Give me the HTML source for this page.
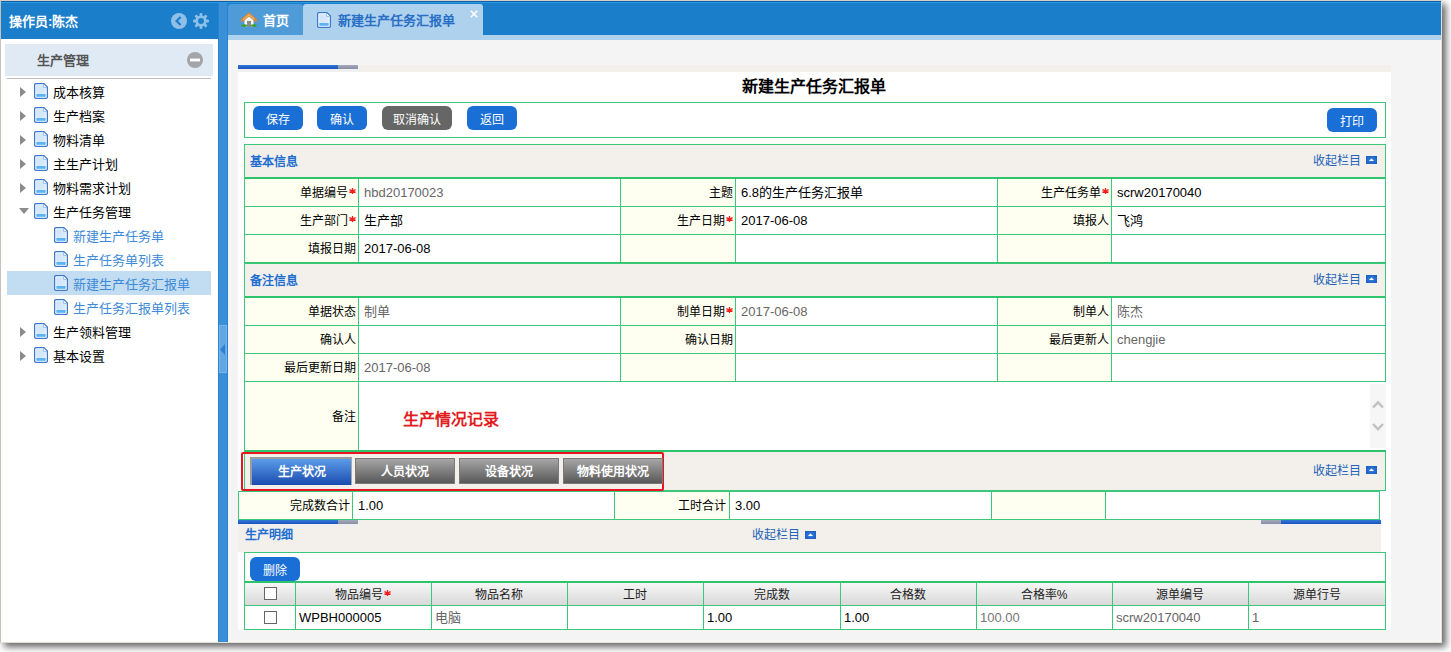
<!DOCTYPE html><html lang="zh-CN"><head><meta charset="utf-8"><style>
html,body{margin:0;padding:0}
body{width:1451px;height:652px;position:relative;overflow:hidden;background:#fff;font-family:"Liberation Sans",sans-serif;font-size:12px;color:#000}
.a{position:absolute}
.t{white-space:nowrap}
.a svg,svg.a{display:block}
.btn{position:absolute;background:#1a6fd6;color:#fff;border-radius:6px;text-align:center;font-size:12px;line-height:28px;height:24px;overflow:hidden;font-weight:300}
</style></head><body>
<div class="a" style="left:0px;top:0px;width:1442px;height:643px;background:#f4f4f4;border-top:1px solid #d8d0c6;border-left:1px solid #c8c2bc;border-right:1px solid #e4ddd6;border-bottom:1px solid #e4ddd6;box-sizing:border-box;box-shadow:4px 4px 7px rgba(0,0,0,.6)"></div>
<div class="a" style="left:1px;top:1px;width:1440px;height:1px;background:#0b5fa5"></div>
<div class="a" style="left:1px;top:2px;width:1440px;height:1px;background:#2a9ae8"></div>
<div class="a" style="left:1px;top:3px;width:217px;height:36px;background:#1a7ecb"></div>
<div class="a" style="left:1px;top:39px;width:217px;height:603px;background:#fff"></div>
<div class="a" style="left:218px;top:3px;width:10px;height:639px;background:#3b8fd6;border-left:1px solid #2582d2;border-right:1px solid #2582d2;box-sizing:border-box"></div>
<div class="a" style="left:219px;top:325px;width:8px;height:48px;background:#62a6e2;border:1px solid #7ab4e8;box-sizing:border-box"></div>
<svg class="a" style="left:220px;top:344px" width="6" height="11"><path d="M5 0 L0 5.5 L5 11 Z" fill="#2f7fd0"/></svg>
<div class="a" style="left:228px;top:3px;width:1213px;height:32px;background:#1a7ecb"></div>
<div class="a" style="left:228px;top:4px;width:75px;height:31px;background:#4f9bd8;border-radius:3px 3px 0 0"></div>
<div class="a" style="left:303px;top:4px;width:180px;height:31px;background:#aed2ee;border-radius:3px 3px 0 0"></div>
<div class="a" style="left:228px;top:35px;width:1213px;height:5px;background:#aed2ee"></div>
<div class="a" style="left:228px;top:40px;width:1213px;height:602px;background:#f4f4f4;border-right:1px solid #fafafa;border-bottom:1px solid #fafafa;box-sizing:border-box"></div>
<div class="a t" style="left:9px;top:14px;height:16px;line-height:16px;color:#fff;font-weight:bold;font-size:13px">操作员:陈杰</div>
<svg class="a" style="left:171px;top:13px" width="16" height="16" viewBox="0 0 16 16"><circle cx="8" cy="8" r="8" fill="#8ec0e8"/><path d="M9.6 4 L5.6 8 L9.6 12" fill="none" stroke="#1a7ecb" stroke-width="2.2"/></svg>
<svg class="a" style="left:193px;top:13px" width="16" height="16" viewBox="0 0 16 16"><g fill="#8ec0e8"><circle cx="8" cy="8" r="5.6"/><rect x="6.6" y="0" width="2.8" height="4" rx="1" transform="rotate(0 8 8)"/><rect x="6.6" y="0" width="2.8" height="4" rx="1" transform="rotate(45 8 8)"/><rect x="6.6" y="0" width="2.8" height="4" rx="1" transform="rotate(90 8 8)"/><rect x="6.6" y="0" width="2.8" height="4" rx="1" transform="rotate(135 8 8)"/><rect x="6.6" y="0" width="2.8" height="4" rx="1" transform="rotate(180 8 8)"/><rect x="6.6" y="0" width="2.8" height="4" rx="1" transform="rotate(225 8 8)"/><rect x="6.6" y="0" width="2.8" height="4" rx="1" transform="rotate(270 8 8)"/><rect x="6.6" y="0" width="2.8" height="4" rx="1" transform="rotate(315 8 8)"/></g><circle cx="8" cy="8" r="3" fill="#1a7ecb"/></svg>
<svg class="a" style="left:241px;top:12px" width="16" height="15" viewBox="0 0 16 15"><path d="M3.5 7 V14.5 H12.5 V7 L8 3 Z" fill="#fafafa"/><rect x="6.3" y="9.2" width="3.4" height="5.3" fill="#8c8c8c" stroke="#777" stroke-width="0.6"/><path d="M1.2 8.3 L8 2.2 L14.8 8.3" fill="none" stroke="#d4873a" stroke-width="3.4" stroke-linejoin="round" stroke-linecap="round"/><path d="M2.5 7.5 L8 2.6 L13.5 7.5" fill="none" stroke="#e8b878" stroke-width="1.2" stroke-linejoin="round"/><ellipse cx="3.2" cy="13.6" rx="3" ry="1.4" fill="#3aa02e"/><ellipse cx="12.8" cy="13.6" rx="3" ry="1.4" fill="#3aa02e"/></svg>
<div class="a t" style="left:263px;top:13px;height:16px;line-height:16px;color:#fff;font-weight:bold;font-size:13px">首页</div>
<div class="a" style="left:317px;top:12px;width:14px;height:16px"><svg width="14" height="16" viewBox="0 0 14 16"><defs><linearGradient id="dg" x1="0" y1="0" x2="1" y2="1"><stop offset="0" stop-color="#c9e0fb"/><stop offset="1" stop-color="#e4effc"/></linearGradient></defs><path d="M1.8 0.65 H9.9 L13.35 4.1 V14.2 Q13.35 15.35 12.2 15.35 H1.8 Q0.65 15.35 0.65 14.2 V1.8 Q0.65 0.65 1.8 0.65 Z" fill="url(#dg)" stroke="#3b78cc" stroke-width="1.3"/><path d="M1.9 1.9 H9.4 L12.1 4.6 V14.1 H1.9 Z" fill="none" stroke="#fff" stroke-width="0.9" opacity="0.8"/><path d="M9.6 1.2 V4.4 H12.8" fill="#fff" stroke="#8fb6ea" stroke-width="0.9"/><rect x="2.4" y="11" width="9.2" height="2.8" fill="#5ab4f6"/></svg></div>
<div class="a t" style="left:338px;top:13px;height:16px;line-height:16px;color:#2a6fc6;font-weight:bold;font-size:13px">新建生产任务汇报单</div>
<svg class="a" style="left:470px;top:10px" width="8" height="8"><path d="M0.8 0.8 L7.2 7.2 M7.2 0.8 L0.8 7.2" stroke="#fff" stroke-width="1.5"/></svg>
<div class="a" style="left:5px;top:44px;width:208px;height:32px;background:#e0eaf4"></div>
<div class="a t" style="left:37px;top:53px;height:16px;line-height:16px;color:#555;font-weight:bold;font-size:13px">生产管理</div>
<svg class="a" style="left:187px;top:52px" width="16" height="16"><circle cx="8" cy="8" r="8" fill="#a2a6aa"/><rect x="3" y="6.6" width="10" height="2.8" fill="#fff"/></svg>
<div class="a" style="left:7px;top:78px;width:204px;height:1px;background:#bdbdbd"></div>
<svg class="a" style="left:20px;top:87px" width="6" height="10"><path d="M0 0 L6 5 L0 10 Z" fill="#8c8c8c"/></svg>
<div class="a" style="left:34px;top:83px;width:14px;height:16px"><svg width="14" height="16" viewBox="0 0 14 16"><defs><linearGradient id="dg" x1="0" y1="0" x2="1" y2="1"><stop offset="0" stop-color="#c9e0fb"/><stop offset="1" stop-color="#e4effc"/></linearGradient></defs><path d="M1.8 0.65 H9.9 L13.35 4.1 V14.2 Q13.35 15.35 12.2 15.35 H1.8 Q0.65 15.35 0.65 14.2 V1.8 Q0.65 0.65 1.8 0.65 Z" fill="url(#dg)" stroke="#3b78cc" stroke-width="1.3"/><path d="M1.9 1.9 H9.4 L12.1 4.6 V14.1 H1.9 Z" fill="none" stroke="#fff" stroke-width="0.9" opacity="0.8"/><path d="M9.6 1.2 V4.4 H12.8" fill="#fff" stroke="#8fb6ea" stroke-width="0.9"/><rect x="2.4" y="11" width="9.2" height="2.8" fill="#5ab4f6"/></svg></div>
<div class="a t" style="left:53px;top:85px;height:16px;line-height:16px;font-size:13px;color:#000">成本核算</div>
<svg class="a" style="left:20px;top:111px" width="6" height="10"><path d="M0 0 L6 5 L0 10 Z" fill="#8c8c8c"/></svg>
<div class="a" style="left:34px;top:107px;width:14px;height:16px"><svg width="14" height="16" viewBox="0 0 14 16"><defs><linearGradient id="dg" x1="0" y1="0" x2="1" y2="1"><stop offset="0" stop-color="#c9e0fb"/><stop offset="1" stop-color="#e4effc"/></linearGradient></defs><path d="M1.8 0.65 H9.9 L13.35 4.1 V14.2 Q13.35 15.35 12.2 15.35 H1.8 Q0.65 15.35 0.65 14.2 V1.8 Q0.65 0.65 1.8 0.65 Z" fill="url(#dg)" stroke="#3b78cc" stroke-width="1.3"/><path d="M1.9 1.9 H9.4 L12.1 4.6 V14.1 H1.9 Z" fill="none" stroke="#fff" stroke-width="0.9" opacity="0.8"/><path d="M9.6 1.2 V4.4 H12.8" fill="#fff" stroke="#8fb6ea" stroke-width="0.9"/><rect x="2.4" y="11" width="9.2" height="2.8" fill="#5ab4f6"/></svg></div>
<div class="a t" style="left:53px;top:109px;height:16px;line-height:16px;font-size:13px;color:#000">生产档案</div>
<svg class="a" style="left:20px;top:135px" width="6" height="10"><path d="M0 0 L6 5 L0 10 Z" fill="#8c8c8c"/></svg>
<div class="a" style="left:34px;top:131px;width:14px;height:16px"><svg width="14" height="16" viewBox="0 0 14 16"><defs><linearGradient id="dg" x1="0" y1="0" x2="1" y2="1"><stop offset="0" stop-color="#c9e0fb"/><stop offset="1" stop-color="#e4effc"/></linearGradient></defs><path d="M1.8 0.65 H9.9 L13.35 4.1 V14.2 Q13.35 15.35 12.2 15.35 H1.8 Q0.65 15.35 0.65 14.2 V1.8 Q0.65 0.65 1.8 0.65 Z" fill="url(#dg)" stroke="#3b78cc" stroke-width="1.3"/><path d="M1.9 1.9 H9.4 L12.1 4.6 V14.1 H1.9 Z" fill="none" stroke="#fff" stroke-width="0.9" opacity="0.8"/><path d="M9.6 1.2 V4.4 H12.8" fill="#fff" stroke="#8fb6ea" stroke-width="0.9"/><rect x="2.4" y="11" width="9.2" height="2.8" fill="#5ab4f6"/></svg></div>
<div class="a t" style="left:53px;top:133px;height:16px;line-height:16px;font-size:13px;color:#000">物料清单</div>
<svg class="a" style="left:20px;top:159px" width="6" height="10"><path d="M0 0 L6 5 L0 10 Z" fill="#8c8c8c"/></svg>
<div class="a" style="left:34px;top:155px;width:14px;height:16px"><svg width="14" height="16" viewBox="0 0 14 16"><defs><linearGradient id="dg" x1="0" y1="0" x2="1" y2="1"><stop offset="0" stop-color="#c9e0fb"/><stop offset="1" stop-color="#e4effc"/></linearGradient></defs><path d="M1.8 0.65 H9.9 L13.35 4.1 V14.2 Q13.35 15.35 12.2 15.35 H1.8 Q0.65 15.35 0.65 14.2 V1.8 Q0.65 0.65 1.8 0.65 Z" fill="url(#dg)" stroke="#3b78cc" stroke-width="1.3"/><path d="M1.9 1.9 H9.4 L12.1 4.6 V14.1 H1.9 Z" fill="none" stroke="#fff" stroke-width="0.9" opacity="0.8"/><path d="M9.6 1.2 V4.4 H12.8" fill="#fff" stroke="#8fb6ea" stroke-width="0.9"/><rect x="2.4" y="11" width="9.2" height="2.8" fill="#5ab4f6"/></svg></div>
<div class="a t" style="left:53px;top:157px;height:16px;line-height:16px;font-size:13px;color:#000">主生产计划</div>
<svg class="a" style="left:20px;top:183px" width="6" height="10"><path d="M0 0 L6 5 L0 10 Z" fill="#8c8c8c"/></svg>
<div class="a" style="left:34px;top:179px;width:14px;height:16px"><svg width="14" height="16" viewBox="0 0 14 16"><defs><linearGradient id="dg" x1="0" y1="0" x2="1" y2="1"><stop offset="0" stop-color="#c9e0fb"/><stop offset="1" stop-color="#e4effc"/></linearGradient></defs><path d="M1.8 0.65 H9.9 L13.35 4.1 V14.2 Q13.35 15.35 12.2 15.35 H1.8 Q0.65 15.35 0.65 14.2 V1.8 Q0.65 0.65 1.8 0.65 Z" fill="url(#dg)" stroke="#3b78cc" stroke-width="1.3"/><path d="M1.9 1.9 H9.4 L12.1 4.6 V14.1 H1.9 Z" fill="none" stroke="#fff" stroke-width="0.9" opacity="0.8"/><path d="M9.6 1.2 V4.4 H12.8" fill="#fff" stroke="#8fb6ea" stroke-width="0.9"/><rect x="2.4" y="11" width="9.2" height="2.8" fill="#5ab4f6"/></svg></div>
<div class="a t" style="left:53px;top:181px;height:16px;line-height:16px;font-size:13px;color:#000">物料需求计划</div>
<svg class="a" style="left:19px;top:208px" width="10" height="6"><path d="M0 0 L10 0 L5 6 Z" fill="#8c8c8c"/></svg>
<div class="a" style="left:34px;top:203px;width:14px;height:16px"><svg width="14" height="16" viewBox="0 0 14 16"><defs><linearGradient id="dg" x1="0" y1="0" x2="1" y2="1"><stop offset="0" stop-color="#c9e0fb"/><stop offset="1" stop-color="#e4effc"/></linearGradient></defs><path d="M1.8 0.65 H9.9 L13.35 4.1 V14.2 Q13.35 15.35 12.2 15.35 H1.8 Q0.65 15.35 0.65 14.2 V1.8 Q0.65 0.65 1.8 0.65 Z" fill="url(#dg)" stroke="#3b78cc" stroke-width="1.3"/><path d="M1.9 1.9 H9.4 L12.1 4.6 V14.1 H1.9 Z" fill="none" stroke="#fff" stroke-width="0.9" opacity="0.8"/><path d="M9.6 1.2 V4.4 H12.8" fill="#fff" stroke="#8fb6ea" stroke-width="0.9"/><rect x="2.4" y="11" width="9.2" height="2.8" fill="#5ab4f6"/></svg></div>
<div class="a t" style="left:53px;top:205px;height:16px;line-height:16px;font-size:13px;color:#000">生产任务管理</div>
<div class="a" style="left:54px;top:227px;width:14px;height:16px"><svg width="14" height="16" viewBox="0 0 14 16"><defs><linearGradient id="dg" x1="0" y1="0" x2="1" y2="1"><stop offset="0" stop-color="#c9e0fb"/><stop offset="1" stop-color="#e4effc"/></linearGradient></defs><path d="M1.8 0.65 H9.9 L13.35 4.1 V14.2 Q13.35 15.35 12.2 15.35 H1.8 Q0.65 15.35 0.65 14.2 V1.8 Q0.65 0.65 1.8 0.65 Z" fill="url(#dg)" stroke="#3b78cc" stroke-width="1.3"/><path d="M1.9 1.9 H9.4 L12.1 4.6 V14.1 H1.9 Z" fill="none" stroke="#fff" stroke-width="0.9" opacity="0.8"/><path d="M9.6 1.2 V4.4 H12.8" fill="#fff" stroke="#8fb6ea" stroke-width="0.9"/><rect x="2.4" y="11" width="9.2" height="2.8" fill="#5ab4f6"/></svg></div>
<div class="a t" style="left:73px;top:229px;height:16px;line-height:16px;font-size:13px;color:#3d8ad8">新建生产任务单</div>
<div class="a" style="left:54px;top:251px;width:14px;height:16px"><svg width="14" height="16" viewBox="0 0 14 16"><defs><linearGradient id="dg" x1="0" y1="0" x2="1" y2="1"><stop offset="0" stop-color="#c9e0fb"/><stop offset="1" stop-color="#e4effc"/></linearGradient></defs><path d="M1.8 0.65 H9.9 L13.35 4.1 V14.2 Q13.35 15.35 12.2 15.35 H1.8 Q0.65 15.35 0.65 14.2 V1.8 Q0.65 0.65 1.8 0.65 Z" fill="url(#dg)" stroke="#3b78cc" stroke-width="1.3"/><path d="M1.9 1.9 H9.4 L12.1 4.6 V14.1 H1.9 Z" fill="none" stroke="#fff" stroke-width="0.9" opacity="0.8"/><path d="M9.6 1.2 V4.4 H12.8" fill="#fff" stroke="#8fb6ea" stroke-width="0.9"/><rect x="2.4" y="11" width="9.2" height="2.8" fill="#5ab4f6"/></svg></div>
<div class="a t" style="left:73px;top:253px;height:16px;line-height:16px;font-size:13px;color:#3d8ad8">生产任务单列表</div>
<div class="a" style="left:7px;top:271px;width:204px;height:24px;background:#c2dcf2"></div>
<div class="a" style="left:54px;top:275px;width:14px;height:16px"><svg width="14" height="16" viewBox="0 0 14 16"><defs><linearGradient id="dg" x1="0" y1="0" x2="1" y2="1"><stop offset="0" stop-color="#c9e0fb"/><stop offset="1" stop-color="#e4effc"/></linearGradient></defs><path d="M1.8 0.65 H9.9 L13.35 4.1 V14.2 Q13.35 15.35 12.2 15.35 H1.8 Q0.65 15.35 0.65 14.2 V1.8 Q0.65 0.65 1.8 0.65 Z" fill="url(#dg)" stroke="#3b78cc" stroke-width="1.3"/><path d="M1.9 1.9 H9.4 L12.1 4.6 V14.1 H1.9 Z" fill="none" stroke="#fff" stroke-width="0.9" opacity="0.8"/><path d="M9.6 1.2 V4.4 H12.8" fill="#fff" stroke="#8fb6ea" stroke-width="0.9"/><rect x="2.4" y="11" width="9.2" height="2.8" fill="#5ab4f6"/></svg></div>
<div class="a t" style="left:73px;top:277px;height:16px;line-height:16px;font-size:13px;color:#3d8ad8">新建生产任务汇报单</div>
<div class="a" style="left:54px;top:299px;width:14px;height:16px"><svg width="14" height="16" viewBox="0 0 14 16"><defs><linearGradient id="dg" x1="0" y1="0" x2="1" y2="1"><stop offset="0" stop-color="#c9e0fb"/><stop offset="1" stop-color="#e4effc"/></linearGradient></defs><path d="M1.8 0.65 H9.9 L13.35 4.1 V14.2 Q13.35 15.35 12.2 15.35 H1.8 Q0.65 15.35 0.65 14.2 V1.8 Q0.65 0.65 1.8 0.65 Z" fill="url(#dg)" stroke="#3b78cc" stroke-width="1.3"/><path d="M1.9 1.9 H9.4 L12.1 4.6 V14.1 H1.9 Z" fill="none" stroke="#fff" stroke-width="0.9" opacity="0.8"/><path d="M9.6 1.2 V4.4 H12.8" fill="#fff" stroke="#8fb6ea" stroke-width="0.9"/><rect x="2.4" y="11" width="9.2" height="2.8" fill="#5ab4f6"/></svg></div>
<div class="a t" style="left:73px;top:301px;height:16px;line-height:16px;font-size:13px;color:#3d8ad8">生产任务汇报单列表</div>
<svg class="a" style="left:20px;top:327px" width="6" height="10"><path d="M0 0 L6 5 L0 10 Z" fill="#8c8c8c"/></svg>
<div class="a" style="left:34px;top:323px;width:14px;height:16px"><svg width="14" height="16" viewBox="0 0 14 16"><defs><linearGradient id="dg" x1="0" y1="0" x2="1" y2="1"><stop offset="0" stop-color="#c9e0fb"/><stop offset="1" stop-color="#e4effc"/></linearGradient></defs><path d="M1.8 0.65 H9.9 L13.35 4.1 V14.2 Q13.35 15.35 12.2 15.35 H1.8 Q0.65 15.35 0.65 14.2 V1.8 Q0.65 0.65 1.8 0.65 Z" fill="url(#dg)" stroke="#3b78cc" stroke-width="1.3"/><path d="M1.9 1.9 H9.4 L12.1 4.6 V14.1 H1.9 Z" fill="none" stroke="#fff" stroke-width="0.9" opacity="0.8"/><path d="M9.6 1.2 V4.4 H12.8" fill="#fff" stroke="#8fb6ea" stroke-width="0.9"/><rect x="2.4" y="11" width="9.2" height="2.8" fill="#5ab4f6"/></svg></div>
<div class="a t" style="left:53px;top:325px;height:16px;line-height:16px;font-size:13px;color:#000">生产领料管理</div>
<svg class="a" style="left:20px;top:351px" width="6" height="10"><path d="M0 0 L6 5 L0 10 Z" fill="#8c8c8c"/></svg>
<div class="a" style="left:34px;top:347px;width:14px;height:16px"><svg width="14" height="16" viewBox="0 0 14 16"><defs><linearGradient id="dg" x1="0" y1="0" x2="1" y2="1"><stop offset="0" stop-color="#c9e0fb"/><stop offset="1" stop-color="#e4effc"/></linearGradient></defs><path d="M1.8 0.65 H9.9 L13.35 4.1 V14.2 Q13.35 15.35 12.2 15.35 H1.8 Q0.65 15.35 0.65 14.2 V1.8 Q0.65 0.65 1.8 0.65 Z" fill="url(#dg)" stroke="#3b78cc" stroke-width="1.3"/><path d="M1.9 1.9 H9.4 L12.1 4.6 V14.1 H1.9 Z" fill="none" stroke="#fff" stroke-width="0.9" opacity="0.8"/><path d="M9.6 1.2 V4.4 H12.8" fill="#fff" stroke="#8fb6ea" stroke-width="0.9"/><rect x="2.4" y="11" width="9.2" height="2.8" fill="#5ab4f6"/></svg></div>
<div class="a t" style="left:53px;top:349px;height:16px;line-height:16px;font-size:13px;color:#000">基本设置</div>
<div class="a" style="left:238px;top:65px;width:1153px;height:7px;background:#f3f0ec"></div>
<div class="a" style="left:238px;top:65px;width:122px;height:7px;background:#f0f0f0"></div>
<div class="a" style="left:238px;top:65px;width:100px;height:4px;background:linear-gradient(#2f7ad6,#1b52be)"></div>
<div class="a" style="left:338px;top:65px;width:20px;height:4px;background:linear-gradient(#a2abb8,#8a8ca6)"></div>
<div class="a" style="left:238px;top:72px;width:1153px;height:558px;background:#fff"></div>
<div class="a t" style="left:614px;width:400px;text-align:center;top:77px;height:20px;line-height:20px;font-size:16px;font-weight:bold;font-family:"Liberation Serif",serif">新建生产任务汇报单</div>
<div class="a" style="left:244px;top:102px;width:1142px;height:36px;border:1px solid #3cc87a;box-sizing:border-box"></div>
<div class="btn" style="left:253px;top:106px;width:50px;background:#1a6fd6">保存</div>
<div class="btn" style="left:317px;top:106px;width:50px;background:#1a6fd6">确认</div>
<div class="btn" style="left:382px;top:106px;width:70px;background:#666">取消确认</div>
<div class="btn" style="left:467px;top:106px;width:50px;background:#1a6fd6">返回</div>
<div class="btn" style="left:1327px;top:108px;width:50px">打印</div>
<div class="a" style="left:245px;top:145px;width:1140px;height:32px;background:#f3f0ec"></div>
<div class="a" style="left:244px;top:144px;width:1142px;height:1px;background:#3cc87a"></div>
<div class="a t" style="left:250px;top:154px;height:16px;line-height:16px;color:#1f6fd0;font-weight:bold;font-size:12px">基本信息</div>
<div class="a" style="left:1366px;top:156px;width:11px;height:8px"><svg width="11" height="8" viewBox="0 0 11 8"><defs><radialGradient id="cg"><stop offset="0" stop-color="#3f86dc"/><stop offset="1" stop-color="#1d62c8"/></radialGradient></defs><rect x="0" y="0" width="11" height="8" fill="url(#cg)"/><path d="M3 5 L5.5 2.5 L8 5 Z" fill="#fff"/></svg></div>
<div class="a t" style="left:1061px;width:300px;text-align:right;top:153px;height:16px;line-height:16px;color:#2262b8;font-size:12px">收起栏目</div>
<div class="a" style="left:244px;top:177px;width:1142px;height:2px;background:#2ec46c"></div>
<div class="a" style="left:245px;top:179px;width:113px;height:27px;background:#fefff0"></div>
<div class="a" style="left:621px;top:179px;width:114px;height:27px;background:#fefff0"></div>
<div class="a" style="left:998px;top:179px;width:113px;height:27px;background:#fefff0"></div>
<div class="a t" style="left:56px;width:300px;text-align:right;top:185px;height:16px;line-height:16px;font-size:12px;color:#000">单据编号<svg width="7" height="6" viewBox="0 0 7 6" style="display:inline-block;vertical-align:3px;margin-left:1px"><path d="M0.4 1.6 L6.6 4.4 M0.4 4.4 L6.6 1.6 M3.5 0 V6" stroke="#f21c1c" stroke-width="1.3"/></svg></div>
<div class="a t" style="left:364px;top:185px;height:16px;line-height:16px;font-size:13px;color:#666">hbd20170023</div>
<div class="a t" style="left:433px;width:300px;text-align:right;top:185px;height:16px;line-height:16px;font-size:12px;color:#000">主题</div>
<div class="a t" style="left:741px;top:185px;height:16px;line-height:16px;font-size:13px;color:#000">6.8的生产任务汇报单</div>
<div class="a t" style="left:809px;width:300px;text-align:right;top:185px;height:16px;line-height:16px;font-size:12px;color:#000">生产任务单<svg width="7" height="6" viewBox="0 0 7 6" style="display:inline-block;vertical-align:3px;margin-left:1px"><path d="M0.4 1.6 L6.6 4.4 M0.4 4.4 L6.6 1.6 M3.5 0 V6" stroke="#f21c1c" stroke-width="1.3"/></svg></div>
<div class="a t" style="left:1117px;top:185px;height:16px;line-height:16px;font-size:13px;color:#000">scrw20170040</div>
<div class="a" style="left:244px;top:206px;width:1142px;height:1px;background:#3cc87a"></div>
<div class="a" style="left:245px;top:207px;width:113px;height:27px;background:#fefff0"></div>
<div class="a" style="left:621px;top:207px;width:114px;height:27px;background:#fefff0"></div>
<div class="a" style="left:998px;top:207px;width:113px;height:27px;background:#fefff0"></div>
<div class="a t" style="left:56px;width:300px;text-align:right;top:213px;height:16px;line-height:16px;font-size:12px;color:#000">生产部门<svg width="7" height="6" viewBox="0 0 7 6" style="display:inline-block;vertical-align:3px;margin-left:1px"><path d="M0.4 1.6 L6.6 4.4 M0.4 4.4 L6.6 1.6 M3.5 0 V6" stroke="#f21c1c" stroke-width="1.3"/></svg></div>
<div class="a t" style="left:364px;top:213px;height:16px;line-height:16px;font-size:13px;color:#000">生产部</div>
<div class="a t" style="left:433px;width:300px;text-align:right;top:213px;height:16px;line-height:16px;font-size:12px;color:#000">生产日期<svg width="7" height="6" viewBox="0 0 7 6" style="display:inline-block;vertical-align:3px;margin-left:1px"><path d="M0.4 1.6 L6.6 4.4 M0.4 4.4 L6.6 1.6 M3.5 0 V6" stroke="#f21c1c" stroke-width="1.3"/></svg></div>
<div class="a t" style="left:741px;top:213px;height:16px;line-height:16px;font-size:13px;color:#000">2017-06-08</div>
<div class="a t" style="left:809px;width:300px;text-align:right;top:213px;height:16px;line-height:16px;font-size:12px;color:#000">填报人</div>
<div class="a t" style="left:1117px;top:213px;height:16px;line-height:16px;font-size:13px;color:#000">飞鸿</div>
<div class="a" style="left:244px;top:234px;width:1142px;height:1px;background:#3cc87a"></div>
<div class="a" style="left:245px;top:235px;width:113px;height:27px;background:#fefff0"></div>
<div class="a" style="left:621px;top:235px;width:114px;height:27px;background:#fefff0"></div>
<div class="a" style="left:998px;top:235px;width:113px;height:27px;background:#fefff0"></div>
<div class="a t" style="left:56px;width:300px;text-align:right;top:241px;height:16px;line-height:16px;font-size:12px;color:#000">填报日期</div>
<div class="a t" style="left:364px;top:241px;height:16px;line-height:16px;font-size:13px;color:#000">2017-06-08</div>
<div class="a" style="left:244px;top:262px;width:1142px;height:1px;background:#3cc87a"></div>
<div class="a" style="left:244px;top:144px;width:1px;height:118px;background:#3cc87a"></div>
<div class="a" style="left:358px;top:179px;width:1px;height:83px;background:#3cc87a"></div>
<div class="a" style="left:620px;top:179px;width:1px;height:83px;background:#3cc87a"></div>
<div class="a" style="left:735px;top:179px;width:1px;height:83px;background:#3cc87a"></div>
<div class="a" style="left:997px;top:179px;width:1px;height:83px;background:#3cc87a"></div>
<div class="a" style="left:1111px;top:179px;width:1px;height:83px;background:#3cc87a"></div>
<div class="a" style="left:1385px;top:144px;width:1px;height:118px;background:#3cc87a"></div>
<div class="a" style="left:244px;top:262px;width:1142px;height:2px;background:#2ec46c"></div>
<div class="a" style="left:245px;top:264px;width:1140px;height:32px;background:#f3f0ec"></div>
<div class="a" style="left:244px;top:263px;width:1142px;height:1px;background:#3cc87a"></div>
<div class="a t" style="left:250px;top:273px;height:16px;line-height:16px;color:#1f6fd0;font-weight:bold;font-size:12px">备注信息</div>
<div class="a" style="left:1366px;top:275px;width:11px;height:8px"><svg width="11" height="8" viewBox="0 0 11 8"><defs><radialGradient id="cg"><stop offset="0" stop-color="#3f86dc"/><stop offset="1" stop-color="#1d62c8"/></radialGradient></defs><rect x="0" y="0" width="11" height="8" fill="url(#cg)"/><path d="M3 5 L5.5 2.5 L8 5 Z" fill="#fff"/></svg></div>
<div class="a t" style="left:1061px;width:300px;text-align:right;top:272px;height:16px;line-height:16px;color:#2262b8;font-size:12px">收起栏目</div>
<div class="a" style="left:244px;top:296px;width:1142px;height:2px;background:#2ec46c"></div>
<div class="a" style="left:245px;top:298px;width:113px;height:27px;background:#fefff0"></div>
<div class="a" style="left:621px;top:298px;width:114px;height:27px;background:#fefff0"></div>
<div class="a" style="left:998px;top:298px;width:113px;height:27px;background:#fefff0"></div>
<div class="a t" style="left:56px;width:300px;text-align:right;top:304px;height:16px;line-height:16px;font-size:12px;color:#000">单据状态</div>
<div class="a t" style="left:364px;top:304px;height:16px;line-height:16px;font-size:13px;color:#666">制单</div>
<div class="a t" style="left:433px;width:300px;text-align:right;top:304px;height:16px;line-height:16px;font-size:12px;color:#000">制单日期<svg width="7" height="6" viewBox="0 0 7 6" style="display:inline-block;vertical-align:3px;margin-left:1px"><path d="M0.4 1.6 L6.6 4.4 M0.4 4.4 L6.6 1.6 M3.5 0 V6" stroke="#f21c1c" stroke-width="1.3"/></svg></div>
<div class="a t" style="left:741px;top:304px;height:16px;line-height:16px;font-size:13px;color:#666">2017-06-08</div>
<div class="a t" style="left:809px;width:300px;text-align:right;top:304px;height:16px;line-height:16px;font-size:12px;color:#000">制单人</div>
<div class="a t" style="left:1117px;top:304px;height:16px;line-height:16px;font-size:13px;color:#666">陈杰</div>
<div class="a" style="left:244px;top:325px;width:1142px;height:1px;background:#3cc87a"></div>
<div class="a" style="left:245px;top:326px;width:113px;height:27px;background:#fefff0"></div>
<div class="a" style="left:621px;top:326px;width:114px;height:27px;background:#fefff0"></div>
<div class="a" style="left:998px;top:326px;width:113px;height:27px;background:#fefff0"></div>
<div class="a t" style="left:56px;width:300px;text-align:right;top:332px;height:16px;line-height:16px;font-size:12px;color:#000">确认人</div>
<div class="a t" style="left:433px;width:300px;text-align:right;top:332px;height:16px;line-height:16px;font-size:12px;color:#000">确认日期</div>
<div class="a t" style="left:809px;width:300px;text-align:right;top:332px;height:16px;line-height:16px;font-size:12px;color:#000">最后更新人</div>
<div class="a t" style="left:1117px;top:332px;height:16px;line-height:16px;font-size:13px;color:#666">chengjie</div>
<div class="a" style="left:244px;top:353px;width:1142px;height:1px;background:#3cc87a"></div>
<div class="a" style="left:245px;top:354px;width:113px;height:27px;background:#fefff0"></div>
<div class="a" style="left:621px;top:354px;width:114px;height:27px;background:#fefff0"></div>
<div class="a" style="left:998px;top:354px;width:113px;height:27px;background:#fefff0"></div>
<div class="a t" style="left:56px;width:300px;text-align:right;top:360px;height:16px;line-height:16px;font-size:12px;color:#000">最后更新日期</div>
<div class="a t" style="left:364px;top:360px;height:16px;line-height:16px;font-size:13px;color:#666">2017-06-08</div>
<div class="a" style="left:244px;top:381px;width:1142px;height:1px;background:#3cc87a"></div>
<div class="a" style="left:244px;top:263px;width:1px;height:118px;background:#3cc87a"></div>
<div class="a" style="left:358px;top:298px;width:1px;height:83px;background:#3cc87a"></div>
<div class="a" style="left:620px;top:298px;width:1px;height:83px;background:#3cc87a"></div>
<div class="a" style="left:735px;top:298px;width:1px;height:83px;background:#3cc87a"></div>
<div class="a" style="left:997px;top:298px;width:1px;height:83px;background:#3cc87a"></div>
<div class="a" style="left:1111px;top:298px;width:1px;height:83px;background:#3cc87a"></div>
<div class="a" style="left:1385px;top:263px;width:1px;height:118px;background:#3cc87a"></div>
<div class="a" style="left:245px;top:382px;width:113px;height:68px;background:#fefff0"></div>
<div class="a" style="left:244px;top:381px;width:1px;height:71px;background:#3cc87a"></div>
<div class="a" style="left:358px;top:381px;width:1px;height:69px;background:#3cc87a"></div>
<div class="a t" style="left:56px;width:300px;text-align:right;top:409px;height:16px;line-height:16px;font-size:12px">备注</div>
<div class="a t" style="left:403px;top:410px;height:20px;line-height:20px;color:#e21c1c;font-weight:bold;font-size:16px">生产情况记录</div>
<div class="a" style="left:1370px;top:384px;width:16px;height:64px;background:#f6f6f6"></div>
<svg class="a" style="left:1371px;top:398px" width="14" height="36"><path d="M2 9.5 L7 4.3 L12 9.5" fill="none" stroke="#c2c2c2" stroke-width="2.4"/><path d="M2 26 L7 31.2 L12 26" fill="none" stroke="#c2c2c2" stroke-width="2.4"/></svg>
<div class="a" style="left:244px;top:450px;width:1142px;height:2px;background:#2ec46c"></div>
<div class="a" style="left:245px;top:452px;width:1140px;height:39px;background:#f3f0ec"></div>
<div class="a" style="left:1385px;top:450px;width:1px;height:41px;background:#3cc87a"></div>
<div class="a" style="left:244px;top:490px;width:1142px;height:1px;background:#3cc87a"></div>
<div class="a" style="left:1366px;top:466px;width:11px;height:8px"><svg width="11" height="8" viewBox="0 0 11 8"><defs><radialGradient id="cg"><stop offset="0" stop-color="#3f86dc"/><stop offset="1" stop-color="#1d62c8"/></radialGradient></defs><rect x="0" y="0" width="11" height="8" fill="url(#cg)"/><path d="M3 5 L5.5 2.5 L8 5 Z" fill="#fff"/></svg></div>
<div class="a t" style="left:1061px;width:300px;text-align:right;top:463px;height:16px;line-height:16px;color:#2262b8;font-size:12px">收起栏目</div>
<div class="a" style="left:244px;top:450px;width:1px;height:39px;background:#3cc87a"></div>
<div class="a" style="left:241px;top:452px;width:423px;height:39px;border:2px solid #e8141e;border-radius:2px;box-sizing:border-box"></div>
<div class="a t" style="left:250px;top:457px;width:102px;height:28px;box-sizing:border-box;border-top:2px solid #9c9c9c;border-left:2px solid #9c9c9c;border-right:1px solid #a8a8a8;background:linear-gradient(#5c9ce8,#1a4cb0);color:#fff;font-weight:bold;font-size:12px;text-align:center;line-height:26px">生产状况</div>
<div class="a t" style="left:355px;top:458px;width:100px;height:26px;box-sizing:border-box;border:1px solid #7a7a7a;background:linear-gradient(#a6a6a6,#585858);color:#fff;font-weight:bold;font-size:12px;text-align:center;line-height:26px">人员状况</div>
<div class="a t" style="left:459px;top:458px;width:100px;height:26px;box-sizing:border-box;border:1px solid #7a7a7a;background:linear-gradient(#a6a6a6,#585858);color:#fff;font-weight:bold;font-size:12px;text-align:center;line-height:26px">设备状况</div>
<div class="a t" style="left:563px;top:458px;width:100px;height:26px;box-sizing:border-box;border:1px solid #7a7a7a;background:linear-gradient(#a6a6a6,#585858);color:#fff;font-weight:bold;font-size:12px;text-align:center;line-height:26px">物料使用状况</div>
<div class="a" style="left:238px;top:491px;width:1142px;height:29px;border:1px solid #3cc87a;box-sizing:border-box;background:#fff"></div>
<div class="a" style="left:239px;top:492px;width:113px;height:27px;background:#fefff0"></div>
<div class="a" style="left:615px;top:492px;width:114px;height:27px;background:#fefff0"></div>
<div class="a" style="left:992px;top:492px;width:113px;height:27px;background:#fefff0"></div>
<div class="a" style="left:352px;top:491px;width:1px;height:29px;background:#3cc87a"></div>
<div class="a" style="left:614px;top:491px;width:1px;height:29px;background:#3cc87a"></div>
<div class="a" style="left:729px;top:491px;width:1px;height:29px;background:#3cc87a"></div>
<div class="a" style="left:991px;top:491px;width:1px;height:29px;background:#3cc87a"></div>
<div class="a" style="left:1105px;top:491px;width:1px;height:29px;background:#3cc87a"></div>
<div class="a t" style="left:50px;width:300px;text-align:right;top:498px;height:16px;line-height:16px;font-size:12px">完成数合计</div>
<div class="a t" style="left:358px;top:498px;height:16px;line-height:16px;font-size:13px">1.00</div>
<div class="a t" style="left:426px;width:300px;text-align:right;top:498px;height:16px;line-height:16px;font-size:12px">工时合计</div>
<div class="a t" style="left:735px;top:498px;height:16px;line-height:16px;font-size:13px">3.00</div>
<div class="a" style="left:238px;top:520px;width:1143px;height:32px;background:#f3f0ec"></div>
<div class="a" style="left:238px;top:520px;width:122px;height:7px;background:#efefef"></div>
<div class="a" style="left:1259px;top:520px;width:122px;height:7px;background:#efefef"></div>
<div class="a" style="left:238px;top:520px;width:100px;height:4px;background:linear-gradient(#2f7ad6,#1b52be)"></div>
<div class="a" style="left:338px;top:520px;width:20px;height:4px;background:linear-gradient(#a2abb8,#8a8ca6)"></div>
<div class="a" style="left:1261px;top:520px;width:20px;height:4px;background:linear-gradient(#a2abb8,#8a8ca6)"></div>
<div class="a" style="left:1281px;top:520px;width:100px;height:4px;background:linear-gradient(#2f7ad6,#1b52be)"></div>
<div class="a t" style="left:245px;top:527px;height:16px;line-height:16px;color:#1f6fd0;font-weight:bold;font-size:12px">生产明细</div>
<div class="a" style="left:805px;top:531px;width:11px;height:8px"><svg width="11" height="8" viewBox="0 0 11 8"><defs><radialGradient id="cg"><stop offset="0" stop-color="#3f86dc"/><stop offset="1" stop-color="#1d62c8"/></radialGradient></defs><rect x="0" y="0" width="11" height="8" fill="url(#cg)"/><path d="M3 5 L5.5 2.5 L8 5 Z" fill="#fff"/></svg></div>
<div class="a t" style="left:500px;width:300px;text-align:right;top:527px;height:16px;line-height:16px;color:#2262b8;font-size:12px">收起栏目</div>
<div class="a" style="left:244px;top:552px;width:1142px;height:78px;border:1px solid #3cc87a;box-sizing:border-box;background:#fff"></div>
<div class="btn" style="left:250px;top:557px;width:50px">删除</div>
<div class="a" style="left:244px;top:581px;width:1142px;height:2px;background:#2ec46c"></div>
<div class="a" style="left:245px;top:583px;width:1140px;height:22px;background:linear-gradient(#f6f6f6,#d9d9d9)"></div>
<div class="a" style="left:244px;top:605px;width:1142px;height:1px;background:#3cc87a"></div>
<div class="a" style="left:295px;top:582px;width:1px;height:47px;background:#3cc87a"></div>
<div class="a" style="left:431px;top:582px;width:1px;height:47px;background:#3cc87a"></div>
<div class="a" style="left:567px;top:582px;width:1px;height:47px;background:#3cc87a"></div>
<div class="a" style="left:703px;top:582px;width:1px;height:47px;background:#3cc87a"></div>
<div class="a" style="left:840px;top:582px;width:1px;height:47px;background:#3cc87a"></div>
<div class="a" style="left:976px;top:582px;width:1px;height:47px;background:#3cc87a"></div>
<div class="a" style="left:1112px;top:582px;width:1px;height:47px;background:#3cc87a"></div>
<div class="a" style="left:1248px;top:582px;width:1px;height:47px;background:#3cc87a"></div>
<div class="a" style="left:264px;top:587px;width:13px;height:13px;border:1px solid #666;background:#fff;box-sizing:border-box"></div>
<div class="a" style="left:264px;top:611px;width:13px;height:13px;border:1px solid #666;background:#fff;box-sizing:border-box"></div>
<div class="a t" style="left:295px;width:136px;text-align:center;top:587px;height:16px;line-height:16px;font-size:12px;color:#222">物品编号<svg width="7" height="6" viewBox="0 0 7 6" style="display:inline-block;vertical-align:3px;margin-left:1px"><path d="M0.4 1.6 L6.6 4.4 M0.4 4.4 L6.6 1.6 M3.5 0 V6" stroke="#f21c1c" stroke-width="1.3"/></svg></div>
<div class="a t" style="left:299px;top:610px;height:16px;line-height:16px;font-size:13px;color:#000">WPBH000005</div>
<div class="a t" style="left:431px;width:136px;text-align:center;top:587px;height:16px;line-height:16px;font-size:12px;color:#222">物品名称</div>
<div class="a t" style="left:435px;top:610px;height:16px;line-height:16px;font-size:13px;color:#666">电脑</div>
<div class="a t" style="left:567px;width:136px;text-align:center;top:587px;height:16px;line-height:16px;font-size:12px;color:#222">工时</div>
<div class="a t" style="left:571px;top:610px;height:16px;line-height:16px;font-size:13px;color:"></div>
<div class="a t" style="left:703px;width:137px;text-align:center;top:587px;height:16px;line-height:16px;font-size:12px;color:#222">完成数</div>
<div class="a t" style="left:707px;top:610px;height:16px;line-height:16px;font-size:13px;color:#000">1.00</div>
<div class="a t" style="left:840px;width:136px;text-align:center;top:587px;height:16px;line-height:16px;font-size:12px;color:#222">合格数</div>
<div class="a t" style="left:844px;top:610px;height:16px;line-height:16px;font-size:13px;color:#000">1.00</div>
<div class="a t" style="left:976px;width:136px;text-align:center;top:587px;height:16px;line-height:16px;font-size:12px;color:#222">合格率%</div>
<div class="a t" style="left:980px;top:610px;height:16px;line-height:16px;font-size:13px;color:#777">100.00</div>
<div class="a t" style="left:1112px;width:136px;text-align:center;top:587px;height:16px;line-height:16px;font-size:12px;color:#222">源单编号</div>
<div class="a t" style="left:1116px;top:610px;height:16px;line-height:16px;font-size:13px;color:#666">scrw20170040</div>
<div class="a t" style="left:1248px;width:137px;text-align:center;top:587px;height:16px;line-height:16px;font-size:12px;color:#222">源单行号</div>
<div class="a t" style="left:1252px;top:610px;height:16px;line-height:16px;font-size:13px;color:#666">1</div>
</body></html>
